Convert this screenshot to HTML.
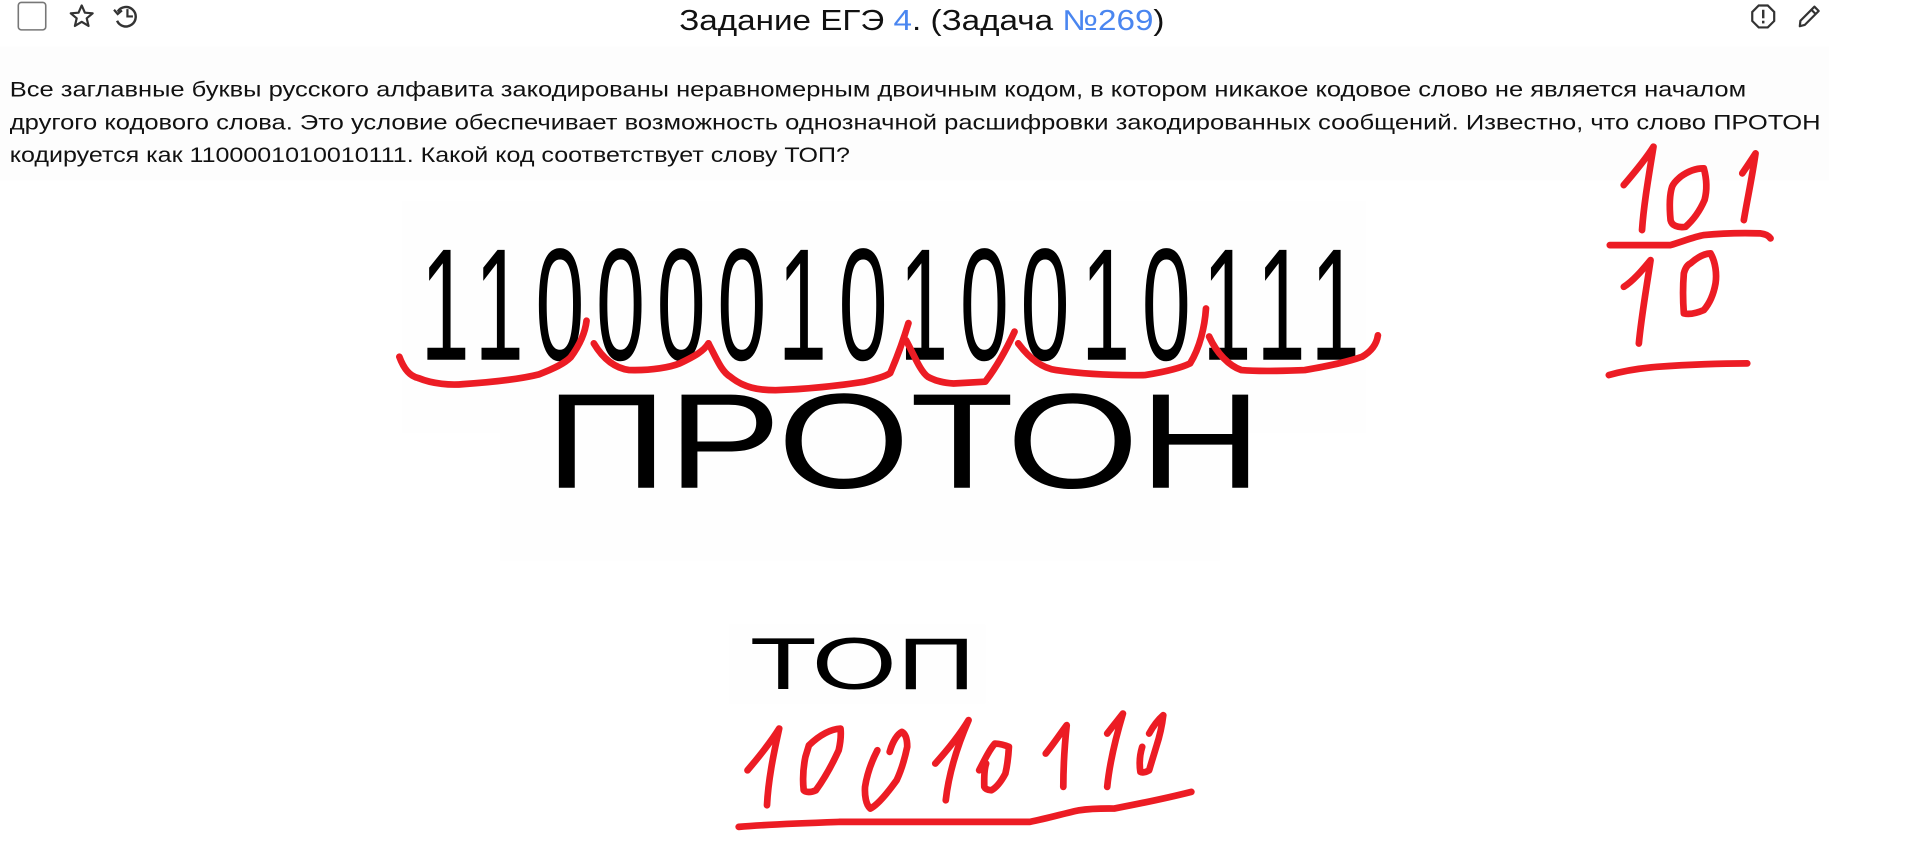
<!DOCTYPE html>
<html><head><meta charset="utf-8"><style>
html,body{margin:0;padding:0;background:#fff;width:1912px;height:846px;overflow:hidden}
svg{display:block}
text{font-family:"Liberation Sans",sans-serif}
</style></head><body>
<svg width="1912" height="846" viewBox="0 0 1568 693.8" xmlns="http://www.w3.org/2000/svg">
<rect x="0" y="38" width="1500" height="110" fill="#fdfdfd"/>
<rect x="330" y="165" width="790" height="190" fill="#fefefe"/>
<rect x="410" y="345" width="590" height="115" fill="#fefefe"/>
<rect x="598" y="512" width="210" height="65" fill="#fefefe"/>
<!-- icons -->
<rect x="15" y="2" width="22.5" height="22.5" rx="2.5" fill="none" stroke="#777" stroke-width="1.3"/>
<path d="M67 4.5 L69.6 10.4 L76 10.9 L71.1 15 L72.6 21.3 L67 17.9 L61.4 21.3 L62.9 15 L58 10.9 L64.4 10.4 Z" fill="none" stroke="#333" stroke-width="1.8" stroke-linejoin="round"/>
<path d="M96.5 9.5 A8 8 0 1 1 96 17" fill="none" stroke="#333" stroke-width="2"/>
<path d="M93.5 8 L96.5 11.5 L100 8.5" fill="none" stroke="#333" stroke-width="1.8"/>
<path d="M104.5 7.5 V13.5 H109" fill="none" stroke="#333" stroke-width="1.8"/>
<path d="M1442.3 4.5 H1449.7 L1455 9.8 V17.2 L1449.7 22.5 H1442.3 L1437 17.2 V9.8 Z" fill="none" stroke="#333" stroke-width="1.8"/>
<rect x="1445" y="8" width="2" height="7" fill="#333"/><rect x="1445" y="17" width="2" height="2.2" fill="#333"/>
<path d="M1476 21.5 L1476.5 17 L1488 5.5 L1491.5 9 L1480 20.5 Z M1485.5 8 L1489 11.5" fill="none" stroke="#333" stroke-width="1.8" stroke-linejoin="round"/>
<!-- title -->
<text x="557" y="24.5" font-size="23.5" textLength="398" lengthAdjust="spacingAndGlyphs" fill="#111">Задание ЕГЭ <tspan fill="#4a86f0">4</tspan>. (Задача <tspan fill="#4a86f0">№269</tspan>)</text>
<!-- body -->
<g font-size="17.6" fill="#111">
<text x="8" y="79" textLength="1424" lengthAdjust="spacingAndGlyphs">Все заглавные буквы русского алфавита закодированы неравномерным двоичным кодом, в котором никакое кодовое слово не является началом</text>
<text x="8" y="106" textLength="1485" lengthAdjust="spacingAndGlyphs">другого кодового слова. Это условие обеспечивает возможность однозначной расшифровки закодированных сообщений. Известно, что слово ПРОТОН</text>
<text x="8" y="133" textLength="689" lengthAdjust="spacingAndGlyphs">кодируется как 1100001010010111. Какой код соответствует слову ТОП?</text>
</g>
<!-- image text -->
<g transform="translate(345 0) scale(0.55 1)">
<text x="0" y="295" font-size="131" textLength="1400" lengthAdjust="spacing" fill="#000">1100001010010111</text>
</g>
<text x="447" y="400" font-size="111" textLength="588" lengthAdjust="spacingAndGlyphs" fill="#000">ПРОТОН</text>
<text x="615" y="565" font-size="60" textLength="185" lengthAdjust="spacingAndGlyphs" fill="#000">ТОП</text>
<!-- red strokes -->
<g fill="none" stroke="#ec1c24" stroke-width="5.5" stroke-linecap="round" stroke-linejoin="round">
<path d="M327.5 292.6 C332 305 338 309 343 310 C355 315 370 316 380 315 C410 313 430 310 442 307 C455 302 463 298 468 293 C476 282 480 272 481 263"/>
<path d="M487 281.6 C495 295 505 302 516 303.5 C535 304 550 301 557.5 298 C570 292 577 288 581 281.6"/>
<path d="M581 281.6 C588 295 592 305 599 309 C610 318 622 320 636 320 C665 319 690 316 709 313 C722 310 727 308 730 306 C737 290 742 275 745 265"/>
<path d="M743 279 C750 292 755 305 761 309 C768 313 775 314 782 314.5 L808 313 C818 300 826 285 832 272"/>
<path d="M835 281.6 C845 295 855 302 866 303.5 C890 307 915 308 939 307.6 C955 305 968 302 976 298 C984 285 988 268 989 253"/>
<path d="M991.6 276 C998 290 1008 300 1018 303.5 C1035 305 1055 304 1070 303.5 C1090 300 1105 297 1117 292.6 C1125 288 1129 282 1130 275"/>
<path d="M1331.6 151.8 C1340 142 1350 130 1356 120.3 C1352 145 1348 168 1346.6 188.7"/>
<path d="M1378.2 144.9 C1385 140 1392 138 1397.3 138.1 C1400 148 1400 156 1397.9 164 C1394 173 1388 181 1382.3 186 C1376 187 1371 185 1370 180.5 C1369 170 1369 160 1371.3 153 C1373 149 1376 147 1378.2 144.9"/>
<path d="M1428.8 142.2 C1433 136 1437 130 1439.7 125.8 C1437 145 1433 163 1430.1 180.5"/>
<path d="M1320.2 201 L1370 201 C1380 198 1390 194 1397.3 192.8 C1415 191 1430 191 1443.8 191.4 C1448 192 1450 193 1452 195.5"/>
<path d="M1331.7 235.2 C1340 230 1348 220 1353.6 213.3 C1350 238 1346 260 1344 281.7"/>
<path d="M1386.4 216 C1392 211 1398 208 1402.8 207.8 C1407 215 1408 225 1406.9 232.4 C1405 243 1401 250 1397.3 254.3 C1391 257 1385 258 1380.9 257 C1380 245 1380 235 1380.9 224.2 C1382 220 1384 217 1386.4 216"/>
<path d="M1319.4 307.6 C1332 304 1345 302 1359 300.8 C1385 299 1410 298 1432.9 298"/>
<path d="M613 631.7 C623 620 633 607 639 597.5 C634 620 630 640 629 660.4"/>
<path d="M663.4 611.2 C672 603 681 598 689.3 597.5 C690 604 689 610 687.8 615.3 C682 628 675 640 669.1 648.1 C665 650 661 650 659.1 648.1 C658 638 659 628 660.5 620.7 Z"/>
<path d="M729.6 616.6 C732 608 736 602 739.6 600.2 C743 602 744 607 744 612.5 C742 622 739 632 735.3 639.9 C728 650 720 660 713.7 663.1 C710 660 709 652 709.4 645.3 C711 635 715 624 719.5 615.3"/>
<path d="M767 626.2 C778 614 788 601 794.3 590.6 C785 612 778 635 775.6 656.3"/>
<path d="M803 631.7 C808 622 812 614 815.9 609.8 C820 610 824 611 827.4 612.5 C827 620 826 628 824.5 634.4 C821 641 817 646 813 648.1 C810 648 808 647 807.2 645.3 C807 638 807 631 808.7 626.2"/>
<path d="M857.6 618 C864 610 870 601 874.8 594.7 C873 612 872 630 872 645.3"/>
<path d="M908 601.6 C913 595 918 589 920.9 585.2 C915 605 910 625 908 645.3"/>
<path d="M942.4 601.6 C946 595 950 590 954 586.5 C953 595 951 604 948.2 612.5 C946 620 944 626 942.4 631.7 C940 633 937 634 935.2 633 C934 625 935 618 936.7 612.5"/>
<path d="M605.8 678.1 C630 676 660 675 689.3 674 L844.6 674 C860 671 873 667 885 664.5 C895 663 905 663 913.7 663.1 C935 659 955 655 977 649.4"/>
</g>
</svg>
</body></html>
